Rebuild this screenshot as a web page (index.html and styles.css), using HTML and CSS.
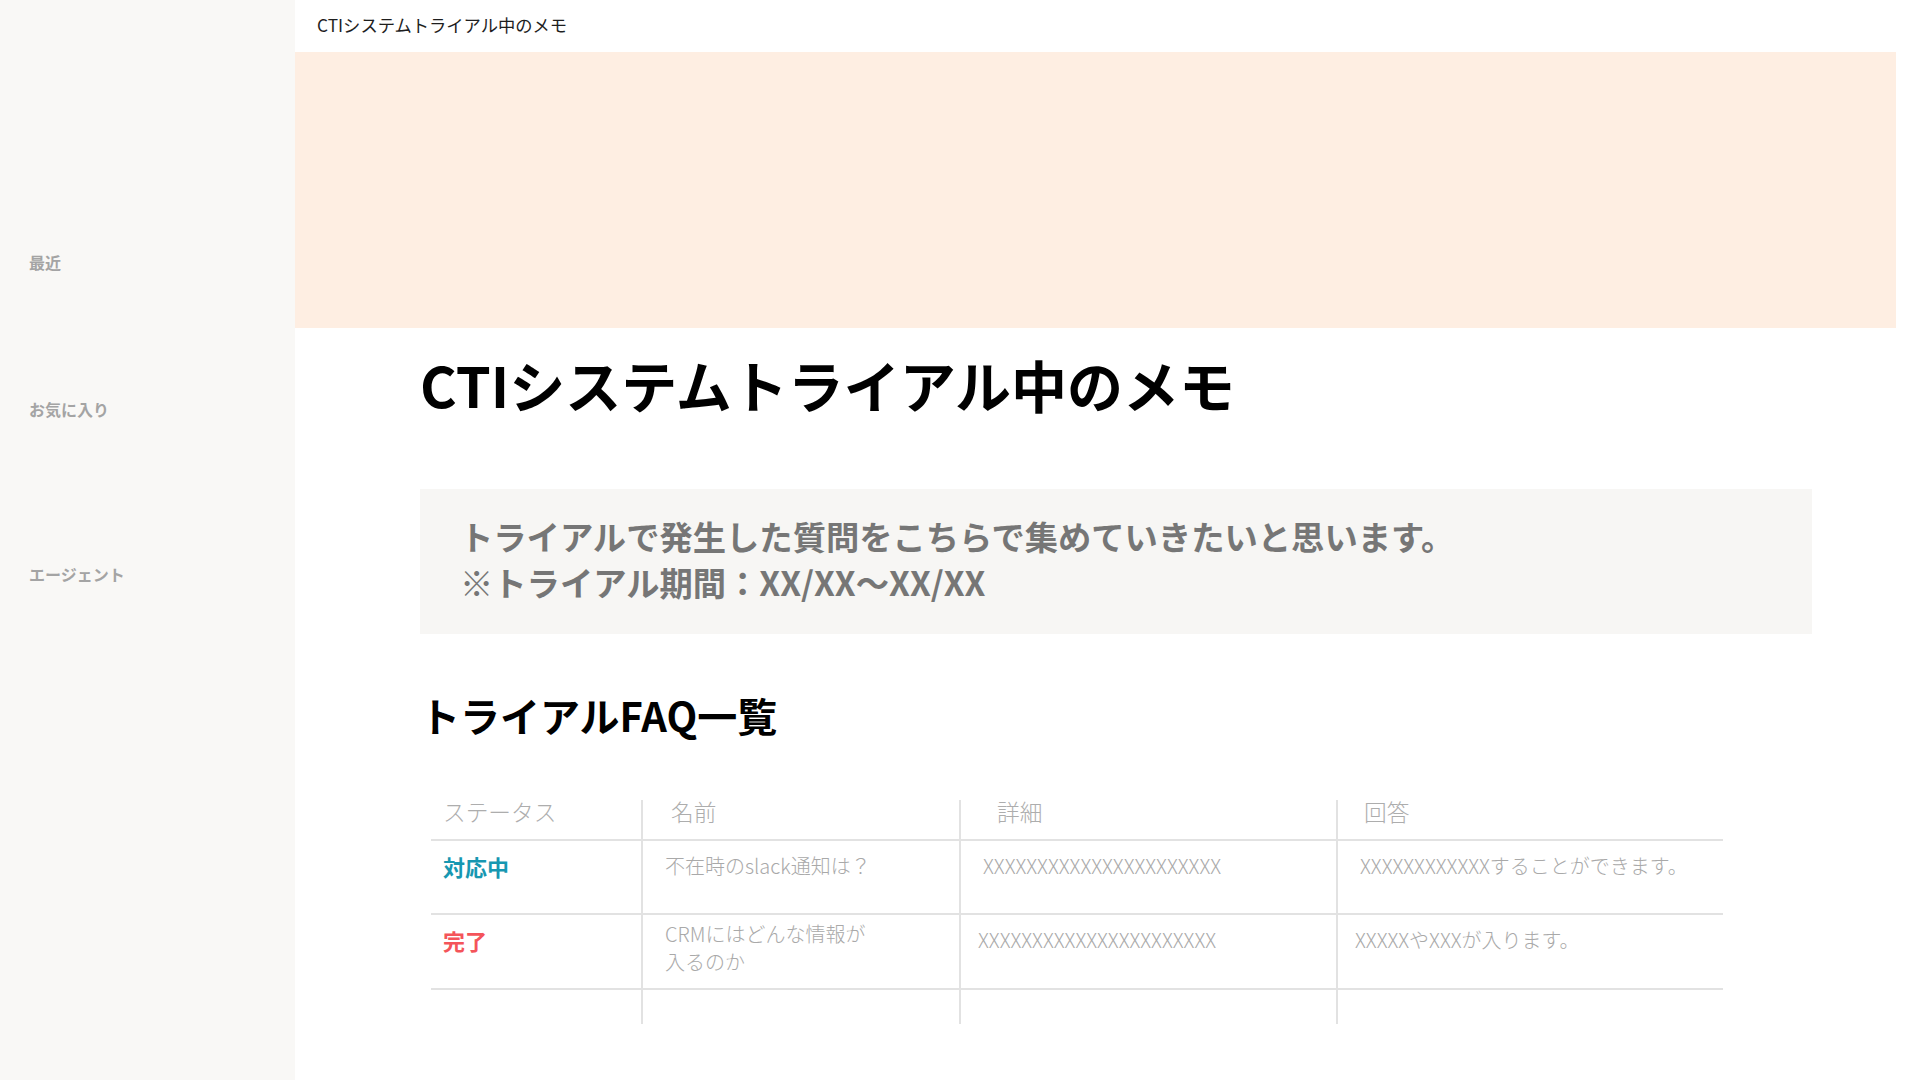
FILE: index.html
```html
<!DOCTYPE html>
<html lang="ja">
<head>
<meta charset="utf-8">
<title>CTIシステムトライアル中のメモ</title>
<link rel="stylesheet" href="styles.css">
</head>
<body>
<div class="app">
  <aside class="sidebar">
    <div class="nav-section nav-recent"><div class="nav-label">最近</div></div>
    <div class="nav-section nav-fav"><div class="nav-label">お気に入り</div></div>
    <div class="nav-section"><div class="nav-label">エージェント</div></div>
  </aside>
  <main class="main">
    <header class="topbar">CTIシステムトライアル中のメモ</header>
    <div class="cover"></div>
    <article class="page">
      <h1 class="page-title">CTIシステムトライアル中のメモ</h1>
      <div class="callout">
        <p>トライアルで発生した質問をこちらで集めていきたいと思います。</p>
        <p>※トライアル期間：XX/XX〜XX/XX</p>
      </div>
      <h2 class="section-title">トライアルFAQ一覧</h2>
      <div class="faq" role="table">
        <div class="row row-head" role="row">
          <div class="cell" role="columnheader">ステータス</div>
          <div class="cell" role="columnheader">名前</div>
          <div class="cell" role="columnheader">詳細</div>
          <div class="cell" role="columnheader">回答</div>
        </div>
        <div class="row row-body" role="row">
          <div class="cell status status-progress" role="cell">対応中</div>
          <div class="cell" role="cell">不在時のslack通知は？</div>
          <div class="cell" role="cell">XXXXXXXXXXXXXXXXXXXXXX</div>
          <div class="cell" role="cell">XXXXXXXXXXXXすることができます。</div>
        </div>
        <div class="row row-body row-tight" role="row">
          <div class="cell status status-done" role="cell">完了</div>
          <div class="cell cell-multi" role="cell">CRMにはどんな情報が<br>入るのか</div>
          <div class="cell" role="cell">XXXXXXXXXXXXXXXXXXXXXX</div>
          <div class="cell" role="cell">XXXXXやXXXが入ります。</div>
        </div>
        <div class="row row-empty" role="row">
          <div class="cell" role="cell"></div>
          <div class="cell" role="cell"></div>
          <div class="cell" role="cell"></div>
          <div class="cell" role="cell"></div>
        </div>
      </div>
    </article>
  </main>
</div>
</body>
</html>
```
FILE: styles.css
```css
* {
  box-sizing: border-box;
}

html, body {
  margin: 0;
  padding: 0;
  background: #ffffff;
}

body {
  font-family: "Noto Sans CJK JP", "Noto Sans", sans-serif;
  color: #111111;
}

.app {
  display: flex;
  min-height: 1080px;
}

/* Sidebar */
.sidebar {
  flex: 0 0 295px;
  width: 295px;
  background: #f9f8f6;
  padding-top: 252px;
}

.nav-recent {
  height: 147px;
}

.nav-fav {
  height: 165px;
}

.nav-label {
  padding-left: 29px;
  font-size: 16px;
  font-weight: 700;
  line-height: 20px;
  color: #a4a4a4;
}

/* Main */
.main {
  flex: 1;
  min-width: 0;
  padding-right: 24px;
}

.topbar {
  height: 52px;
  line-height: 50px;
  padding-left: 22px;
  font-size: 17.3px;
  color: #1e1e1e;
}

.cover {
  height: 276px;
  background: #feeee2;
}

.page {
  padding: 0 84px 0 125px;
}

.page-title {
  margin: 21.5px 0 0;
  font-size: 56px;
  font-weight: 700;
  line-height: 67px;
  color: #000000;
}

.callout {
  margin-top: 72px;
  padding: 24px 40px 29px;
  background: #f7f6f4;
  font-size: 33.3px;
  font-weight: 700;
  line-height: 46px;
  color: #767676;
}

.callout p {
  margin: 0;
}

.section-title {
  margin: 55px 0 0;
  font-size: 40px;
  font-weight: 700;
  line-height: 52px;
  color: #000000;
}

/* FAQ table */
.faq {
  margin: 59px 0 0 11px;
  display: grid;
  grid-template-columns: 210px 318px 377px 387px;
  grid-template-rows: 41px 74px 75px 34px;
}

.row {
  display: contents;
}

.cell {
  border-bottom: 2px solid #e2e2e2;
  font-size: 20px;
  font-weight: 300;
  line-height: 28px;
  color: #a9a9a9;
  padding-top: 11px;
  white-space: nowrap;
}

.row > .cell + .cell {
  border-left: 2px solid #e2e2e2;
}

.row-head .cell {
  padding-top: 0;
  font-size: 22.7px;
  line-height: 24px;
  color: #adadad;
}

.row-head .cell:nth-child(1) { padding-left: 12px; }
.row-head .cell:nth-child(2) { padding-left: 28px; }
.row-head .cell:nth-child(3) { padding-left: 36px; }
.row-head .cell:nth-child(4) { padding-left: 26px; }

.row-body .cell:nth-child(1) { padding-left: 12px; }
.row-body .cell:nth-child(2) { padding-left: 22px; }
.row-body .cell:nth-child(3) { padding-left: 22px; }
.row-body .cell:nth-child(4) { padding-left: 22px; }

.row-tight .cell:nth-child(3) { padding-left: 17px; }
.row-tight .cell:nth-child(4) { padding-left: 17px; }

.row-body .cell-multi {
  padding-top: 5px;
}

.row-empty .cell {
  border-bottom: none;
}

.status {
  font-size: 22px;
  font-weight: 700;
}

.status-progress {
  color: #1797b1;
}

.status-done {
  color: #f4545a;
}
```
